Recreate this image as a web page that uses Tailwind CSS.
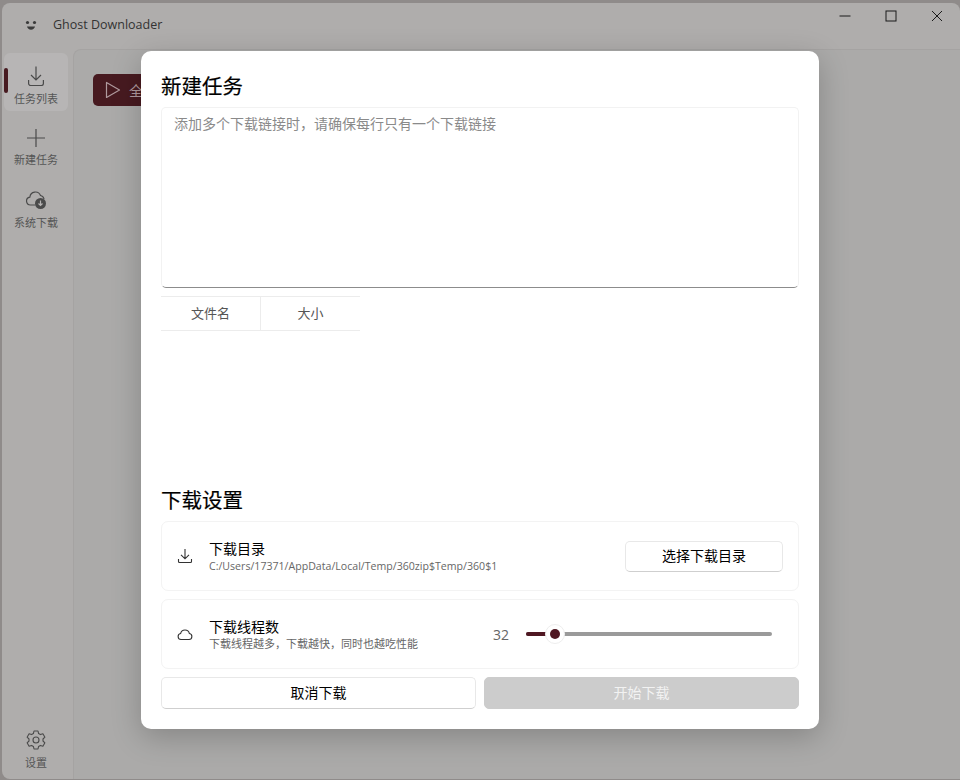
<!DOCTYPE html>
<html lang="zh-CN">
  <head>
    <meta charset="UTF-8" />
    <title>Ghost Downloader</title>
    <script src="https://cdn.jsdelivr.net/npm/@tailwindcss/browser@4"></script>
  </head>
  <body class="bg-[#8f8b8a] font-['Open_Sans','Noto_Sans_CJK_SC',sans-serif]">
    <div class="relative w-[960px] h-[780px] overflow-hidden pt-[3px] pl-[2px]">
      <!-- Window -->
      <div class="flex flex-col w-full h-[776px] rounded-[8px] bg-[#afadac]">
        <!-- Title bar -->
        <div class="flex items-center h-[46px] shrink-0">
          <svg class="ml-[22px] mt-[-2px]" width="14" height="14" viewBox="0 0 14 14" fill="#3a3a3a">
            <circle cx="3.500" cy="4.500" r="1.600" />
            <circle cx="10.500" cy="4.500" r="1.600" />
            <path d="M3 8.500h8c-.4 2-2 3.200-4 3.200S3.400 10.500 3 8.500z" />
          </svg>
          <span class="ml-[15px] mt-[-1px] text-[12.500px] text-[#333]">Ghost Downloader</span>
          <div class="ml-auto flex items-center mt-[-20px] pr-[17px] gap-[34px]">
            <svg width="12" height="12" viewBox="0 0 12 12" stroke="#1a1a1a" fill="none"><path d="M0.500 6h11" /></svg>
            <svg width="12" height="12" viewBox="0 0 12 12" stroke="#1a1a1a" fill="none"><rect x="1" y="1" width="10" height="10" /></svg>
            <svg width="12" height="12" viewBox="0 0 12 12" stroke="#1a1a1a" fill="none"><path d="M1 1l10 10M11 1L1 11" /></svg>
          </div>
        </div>
        <div class="flex flex-1 min-h-0">
          <!-- Sidebar -->
          <div class="relative flex flex-col w-[71px] shrink-0 pl-[2px]">
            <div class="relative flex flex-col items-center w-[64px] h-[58px] mt-[4px] rounded-[6px] bg-[#b7b5b5]">
              <div class="absolute left-[0px] top-[15px] w-[4px] h-[25px] rounded-full bg-[#471a20]"></div>
              <svg class="mt-[13px]" width="16" height="20" viewBox="0 0 16 20" fill="none" stroke="#4a4a4a" stroke-width="1.200">
                <path d="M8 .5v13.500M3 9l5 5 5-5M.6 14v3.500a2 2 0 0 0 2 2h10.800a2 2 0 0 0 2-2V14" />
              </svg>
              <span class="text-[11px] leading-[16px] mt-[5px] text-[#555]">任务列表</span>
            </div>
            <div class="flex flex-col items-center w-[64px] h-[58px] mt-[4px]">
              <svg class="mt-[13px]" width="20" height="20" viewBox="0 0 20 20" fill="none" stroke="#4a4a4a" stroke-width="1.200">
                <path d="M10 1v18M1 10h18" />
              </svg>
              <span class="text-[11px] leading-[16px] mt-[4px] text-[#555]">新建任务</span>
            </div>
            <div class="flex flex-col items-center w-[64px] h-[58px] mt-[4px]">
              <svg class="mt-[11px]" width="24" height="24" viewBox="0 0 24 24" fill="none" stroke="#4a4a4a" stroke-width="1.200">
                <path d="M11 17H6.500a4 4 0 0 1-.6-7.950A5.500 5.500 0 0 1 16.500 7.500a4.500 4.500 0 0 1 3.500 3.500" />
                <circle cx="16.500" cy="15.500" r="5.500" fill="#4a4a4a" stroke="none" />
                <path d="M16.500 12.500v5M14.500 15.500l2 2 2-2" stroke="#b5b3b2" />
              </svg>
              <span class="text-[11px] leading-[16px] mt-[3px] text-[#555]">系统下载</span>
            </div>
            <div class="mt-auto mb-[8px] flex flex-col items-center w-[64px]">
              <svg width="22" height="22" viewBox="0 0 22 22" fill="none" stroke="#4a4a4a" stroke-width="1.100">
                <path d="M9 2h4l.6 2.600 1.800 1 2.500-.8 2 3.400-1.900 1.800v2l1.900 1.800-2 3.400-2.500-.8-1.800 1-.6 2.600H9l-.6-2.600-1.800-1-2.500.8-2-3.400 1.900-1.800v-2L2.100 8.200l2-3.400 2.500.8 1.800-1z" stroke-linejoin="round" />
                <circle cx="11" cy="11" r="3" />
              </svg>
              <span class="text-[11px] leading-[16px] mt-[4px] text-[#555]">设置</span>
            </div>
          </div>
          <!-- Main panel behind the dialog -->
          <div class="flex-1 rounded-tl-[8px] border-t border-l border-[#a5a3a2] bg-[#abaaa9] pl-[19px] pt-[24px]">
            <div class="flex items-center gap-[8px] w-[100px] h-[32px] rounded-[5px] bg-[#471a20] pl-[12px]">
              <svg width="16" height="18" viewBox="0 0 16 18" fill="none" stroke="#b09a9e" stroke-width="1.200"><path d="M1.500 1.500v15l13-7.500z" stroke-linejoin="round" /></svg>
              <span class="text-[14px] text-[#b09a9e]">全部开始</span>
            </div>
          </div>
        </div>
      </div>

      <!-- Dialog -->
      <div class="absolute left-[141px] top-[51px] flex flex-col w-[678px] h-[678px] rounded-[10px] bg-white px-[20px] pb-[20px] shadow-[0_8px_30px_rgba(0,0,0,0.22)]">
        <h1 class="mt-[20px] text-[20.500px] leading-[30px] font-normal text-black [-webkit-text-stroke:0.2px_black]">新建任务</h1>
        <div class="mt-[6px] h-[181px] shrink-0 rounded-[5px] border border-[#f2f2f2] border-b-[#8c8c8c] px-[12px] py-[6px] text-[14px] leading-[20px] text-[#8a8a8a]">添加多个下载链接时，请确保每行只有一个下载链接</div>
        <div class="flex w-[199px] h-[35px] mt-[8px] border-y border-[#ececec] text-[13px] text-[#555]">
          <div class="flex items-center justify-center w-[100px] border-r border-[#ececec]">文件名</div>
          <div class="flex items-center justify-center flex-1">大小</div>
        </div>
        <div class="flex-1"></div>
        <h2 class="text-[20.500px] leading-[30px] font-normal text-black [-webkit-text-stroke:0.2px_black]">下载设置</h2>
        <div class="flex items-center h-[70px] mt-[6px] rounded-[7px] border border-[#f3f3f3] pl-[15px] pr-[15px]">
          <svg width="16" height="16" viewBox="0 0 16 16" fill="none" stroke="#333" stroke-width="1.100"><path d="M8 1v9.500M4 6.800l4 4 4-4M1.500 11v2.500a1 1 0 0 0 1 1h11a1 1 0 0 0 1-1V11" /></svg>
          <div class="ml-[16px] mt-[1px] flex flex-col">
            <span class="text-[14px] leading-[18px] text-black">下载目录</span>
            <span class="mt-[1px] text-[10.600px] leading-[14px] text-[#666]">C:/Users/17371/AppData/Local/Temp/360zip$Temp/360$1</span>
          </div>
          <button class="ml-auto w-[158px] h-[31px] pb-[2px] rounded-[5px] border border-[#e8e8e8] border-b-[#cfcfcf] text-[14px] text-black">选择下载目录</button>
        </div>
        <div class="flex items-center h-[70px] mt-[8px] rounded-[7px] border border-[#f3f3f3] pl-[15px]">
          <svg width="16" height="16" viewBox="0 0 16 16" fill="none" stroke="#333" stroke-width="1.100"><path d="M4 13.500a3 3 0 0 1-.4-5.950 4.500 4.500 0 0 1 8.800 0A3 3 0 0 1 12 13.500z" stroke-linejoin="round" /></svg>
          <div class="ml-[16px] mt-[2px] flex flex-col w-[284px]">
            <span class="text-[14px] leading-[15px] text-black">下载线程数</span>
            <span class="mt-[3px] text-[11px] leading-[14px] text-[#666]">下载线程越多，下载越快，同时也越吃性能</span>
          </div>
          <span class="text-[14px] text-[#666] w-[33px]">32</span>
          <div class="relative w-[246px] h-[4px] mt-[-1px] rounded-full bg-[#9a9a9a]">
            <div class="absolute left-0 top-0 h-[4px] w-[22px] rounded-full bg-[#4f1722]"></div>
            <div class="absolute left-[19px] top-[-8px] flex items-center justify-center w-[20px] h-[20px] rounded-full bg-white border border-[#eeeeee]">
              <div class="w-[10px] h-[10px] rounded-full bg-[#4f1722]"></div>
            </div>
          </div>
        </div>
        <div class="flex gap-[8px] mt-[8px]">
          <button class="flex-1 h-[32px] pb-[2px] rounded-[5px] border border-[#e8e8e8] border-b-[#cfcfcf] text-[14px] text-black">取消下载</button>
          <button class="flex-1 h-[32px] pb-[2px] rounded-[5px] border border-[#cccccc] bg-[#cccccc] text-[14px] text-[#f2f2f2]">开始下载</button>
        </div>
      </div>
    </div>
  </body>
</html>
